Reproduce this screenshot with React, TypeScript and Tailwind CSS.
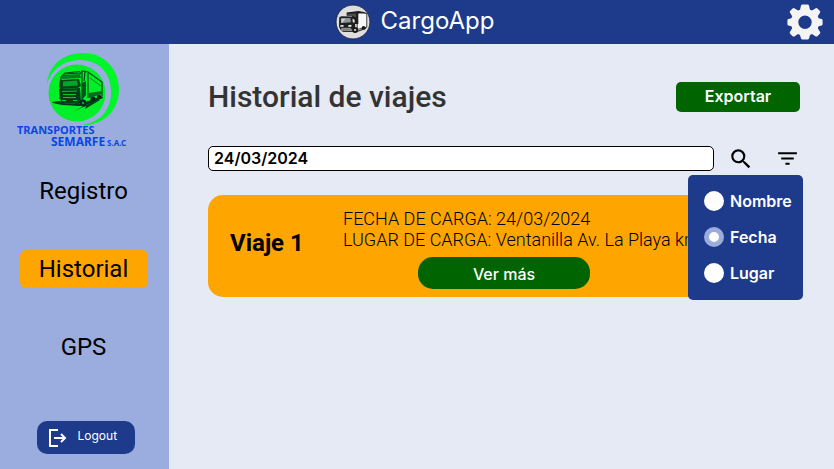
import { useState } from "react";

function TruckBadge() {
  return (
    <svg viewBox="0 0 34 34" className="size-9" aria-hidden="true">
      <circle cx="17" cy="17" r="16" fill="#dedede" stroke="#17213f" strokeWidth="0.8" />
      <path d="M21 8l9 1v13l-9 2z" fill="#f7f7f7" stroke="#222" strokeWidth="0.8" />
      <path d="M11 8l11-1.500L30 8l-8 1v10h-5l-1-8h-5z" fill="#1c1c1c" />
      <path d="M12 9.500l8-.8v4l-4-1.500-5 .3z" fill="#4c4c4c" />
      <path d="M4 12.500l2-1 10 .2 3 1.500v9l-2 2H5l-1.200-3z" fill="#202020" />
      <path d="M5.500 13.500l9-.3.6 4-9.300.8z" fill="#8f979c" />
      <path d="M6 14l4-.2-3 3.800H6z" fill="#c8ced1" />
      <path d="M16.500 14l2 .8v3l-1.700-.6z" fill="#e6e6e6" />
      <path d="M5 20l3-.2v1.700H5zM12.500 20l3-.3v1.700l-3 .1z" fill="#f5f5f5" />
      <path d="M6 23h9" stroke="#bbb" strokeWidth="0.8" />
      <path d="M5 25h17l8-3-1 1.500-8 3H8z" fill="#333" />
      <circle cx="19" cy="24.500" r="2.800" fill="#181818" />
      <circle cx="19" cy="24.500" r="1.100" fill="#bbb" />
      <circle cx="27" cy="22.500" r="1.800" fill="#181818" />
    </svg>
  );
}

function CompanyLogo() {
  return (
    <svg viewBox="0 0 116 100" className="h-[100px] w-[116px]" role="img" aria-label="Transportes Semarfe S.A.C">
      <path
        d="M30 32C32 12 47 1 66 1c21 0 36 16 36 36 0 23-17 37-38 36 19-2 30-15 30-33 0-20-13-32-31-32-16 0-28 9-33 24z"
        fill="#00f52a"
      />
      <circle cx="60" cy="41" r="28.500" fill="#00ef29" />
      <g fill="none" stroke="#06451a" strokeWidth="1.200">
        <path d="M44 25l4-4 15-1.500M44 25l-1 22M63 22l2-3 6 1 14 10v14" />
        <path d="M47 22l16-1M65 20v28M71 21v25M68 20l-1 9" />
        <path d="M73 26l11 8" strokeWidth="0.600" />
      </g>
      <path d="M45 23l18-1 1 4-19 1z" fill="#0a7a24" />
      <path d="M43 28l19-1 2 7-3 2-17 1-2-2z" fill="#06451a" />
      <path d="M46 29.500l14-1 1 5-15 1z" fill="#04a329" />
      <path d="M42 37l21-1 1 14-2 2-18-1z" fill="#063d19" />
      <path d="M45 39.500l15-.5M46 42.500h13M46 45.500h13M45 48.500h4M56 48.500h4" stroke="#00cc29" strokeWidth="1.200" />
      <path d="M65 31l4-2v14l-4 5z" fill="#06531d" />
      <path d="M72 41l13-2v3l-13 4z" fill="#0a6a22" />
      <path d="M35 50l8-1 2 2 18 1 22-8 1 2-17 7-7 1-17-1-9-2z" fill="#05351a" />
      <path d="M57 59l22-11 4 0-15 9 1-3z" fill="#063d19" />
      <circle cx="66" cy="51" r="3.500" fill="#05281a" />
      <circle cx="66" cy="51" r="1.300" fill="#04a329" />
      <circle cx="76" cy="47" r="2.600" fill="#05281a" />
      <circle cx="82" cy="45" r="2.200" fill="#05281a" />
      <g fill="#0b46e5" fontFamily="'Noto Sans', 'Open Sans', sans-serif" fontWeight="700">
        <text x="0" y="82" fontSize="11">TRANSPORTES</text>
        <text x="34" y="94" fontSize="12">SEMARFE</text>
        <text x="90" y="94" fontSize="8">S.A.C</text>
      </g>
    </svg>
  );
}

function GearIcon() {
  return (
    <svg viewBox="0 0 36 36" className="size-9" fill="#f4f4f4" aria-hidden="true">
      <path
        fillRule="evenodd"
        d="M14 1.500Q14.300.500 15.500.500h5Q21.700.500 22 1.500l1 4.200 2 .8 3.700-2.300q1-.5 1.700.2l2.500 2.500q.7.700.2 1.700L30.800 12.300l.8 2 3 .7q1 .3 1 1.300v4q0 1-1 1.300l-3 .7-.8 2 2.300 3.700q.5 1-.2 1.700l-2.500 2.500q-.7.700-1.700.2L25 30.100l-2 .8-1 3.600q-.3 1-1.500 1h-5q-1.200 0-1.500-1l-1-3.600-2-.8-3.700 2.300q-1 .5-1.700-.2l-2.500-2.500q-.7-.7-.2-1.700l2.300-3.700-.8-2-3-.7q-1-.3-1-1.300v-4q0-1 1-1.300l3-.7.8-2-2.300-3.700q-.5-1 .2-1.700l2.500-2.500q.7-.7 1.700-.2L11 6.500l2-.8zM18 11.500a6.700 6.700 0 1 0 0 13.400a6.700 6.700 0 1 0 0-13.400z"
      />
    </svg>
  );
}

const navItems = ["Registro", "Historial", "GPS"];
const filters = ["Nombre", "Fecha", "Lugar"];

export default function App() {
  const [section, setSection] = useState("Historial");
  const [filter, setFilter] = useState("Fecha");
  const [query, setQuery] = useState("24/03/2024");

  return (
    <div className="flex min-h-screen flex-col bg-[#e5eaf5] font-['Roboto',sans-serif] text-black">
      <header className="grid h-11 grid-cols-[1fr_auto_1fr] items-center bg-[#1e3a8a] pr-[11px] pl-1.5">
        <span />
        <div className="flex items-center gap-2.5">
          <TruckBadge />
          <span className="pb-0.5 font-['Inter',sans-serif] text-2xl leading-8 text-white">CargoApp</span>
        </div>
        <button type="button" aria-label="Configuración" className="justify-self-end pb-px">
          <GearIcon />
        </button>
      </header>

      <div className="flex flex-1">
        <aside className="flex w-[169px] shrink-0 flex-col items-center bg-[#9badde] pt-2 pb-[15px]">
          <div className="pr-9 pl-[17px]">
            <CompanyLogo />
          </div>
          <nav className="mt-5 mr-0.5 flex flex-col gap-10">
            {navItems.map((item) => (
              <button
                key={item}
                type="button"
                onClick={() => setSection(item)}
                className={`h-[38px] w-32 rounded-md pb-px text-2xl ${item === section ? "bg-[#ffa500]" : ""}`}
              >
                {item}
              </button>
            ))}
          </nav>
          <button
            type="button"
            className="mt-auto ml-0.5 flex h-[33px] w-[98px] items-center gap-[11px] rounded-[10px] bg-[#1e3a8a] pl-3 text-white"
          >
            <svg viewBox="0 0 18 18" className="size-[18px]" fill="none" stroke="white" strokeWidth="2" aria-hidden="true">
              <path d="M9 1H1v16h8M5 9h11M12 5l4 4-4 4" />
            </svg>
            <span className="pb-1 font-['Inter',sans-serif] text-xs">Logout</span>
          </button>
        </aside>

        <main className="min-w-0 flex-1 pt-[34px] pr-[34px] pl-[39px]">
          <div className="flex items-center justify-between">
            <h1 className="text-[30px] leading-[38px] font-medium text-[#333333]">Historial de viajes</h1>
            <button
              type="button"
              className="h-[30px] w-[124px] rounded-[5px] bg-[#006400] pb-0.5 font-['Inter',sans-serif] text-base font-semibold text-white"
            >
              Exportar
            </button>
          </div>

          <div className="mt-[30px] flex h-[25px] items-center">
            <input
              type="text"
              aria-label="Buscar viajes"
              value={query}
              onChange={(event) => setQuery(event.target.value)}
              className="h-[25px] min-w-0 flex-1 rounded-[5px] border border-black bg-white px-[5px] pb-0.5 font-['Inter',sans-serif] text-base font-semibold outline-none"
            />
            <button type="button" aria-label="Buscar" className="ml-[14px]">
              <svg viewBox="0 0 24 24" className="size-[26px]" aria-hidden="true">
                <path d="M15.500 14h-.79l-.28-.27A6.471 6.471 0 0 0 16 9.500 6.500 6.500 0 1 0 9.500 16c1.610 0 3.090-.59 4.230-1.570l.27.28v.79l5 4.990L20.490 19l-4.990-5zm-6 0C7.010 14 5 11.990 5 9.500S7.010 5 9.500 5 14 7.010 14 9.500 11.990 14 9.500 14z" />
              </svg>
            </button>
            <div className="relative ml-[21px] h-[25px]">
              <button type="button" aria-label="Filtrar" className="block">
                <svg viewBox="0 0 24 24" className="size-[25px]" aria-hidden="true">
                  <path d="M10 18h4v-2h-4v2zM3 6v2h18V6H3zm3 7h12v-2H6v2z" />
                </svg>
              </button>
              <fieldset
                aria-label="Filtrar por"
                className="absolute top-[29px] -right-[3px] z-10 flex w-[115px] flex-col gap-4 rounded-[5px] bg-[#1e3a8a] pt-4 pr-2 pb-[17px] pl-4"
              >
                {filters.map((name) => (
                  <label
                    key={name}
                    className="flex h-5 items-center gap-1.5 font-['Inter',sans-serif] text-base font-semibold text-white"
                  >
                    <input
                      type="radio"
                      name="filter"
                      checked={filter === name}
                      onChange={() => setFilter(name)}
                      className="size-5 shrink-0 appearance-none rounded-full bg-white checked:border-[5px] checked:border-[#9badde]"
                    />
                    {name}
                  </label>
                ))}
              </fieldset>
            </div>
          </div>

          <article className="mt-6 flex h-[102px] overflow-hidden rounded-[15px] bg-[#ffa500]">
            <h2 className="w-[135px] shrink-0 pt-8 pl-[22px] text-2xl font-bold">Viaje 1</h2>
            <div className="min-w-0 flex-1 pt-[13px]">
              <p className="text-lg leading-[21px] font-light whitespace-nowrap">FECHA DE CARGA: 24/03/2024</p>
              <p className="text-lg leading-[21px] font-light whitespace-nowrap">LUGAR DE CARGA: Ventanilla Av. La Playa km</p>
              <button
                type="button"
                className="mt-[7px] ml-[75px] block h-8 w-[172px] rounded-[15px] bg-[#006400] pt-0.5 font-['Inter',sans-serif] text-base font-medium text-white"
              >
                Ver más
              </button>
            </div>
          </article>
        </main>
      </div>
    </div>
  );
}
